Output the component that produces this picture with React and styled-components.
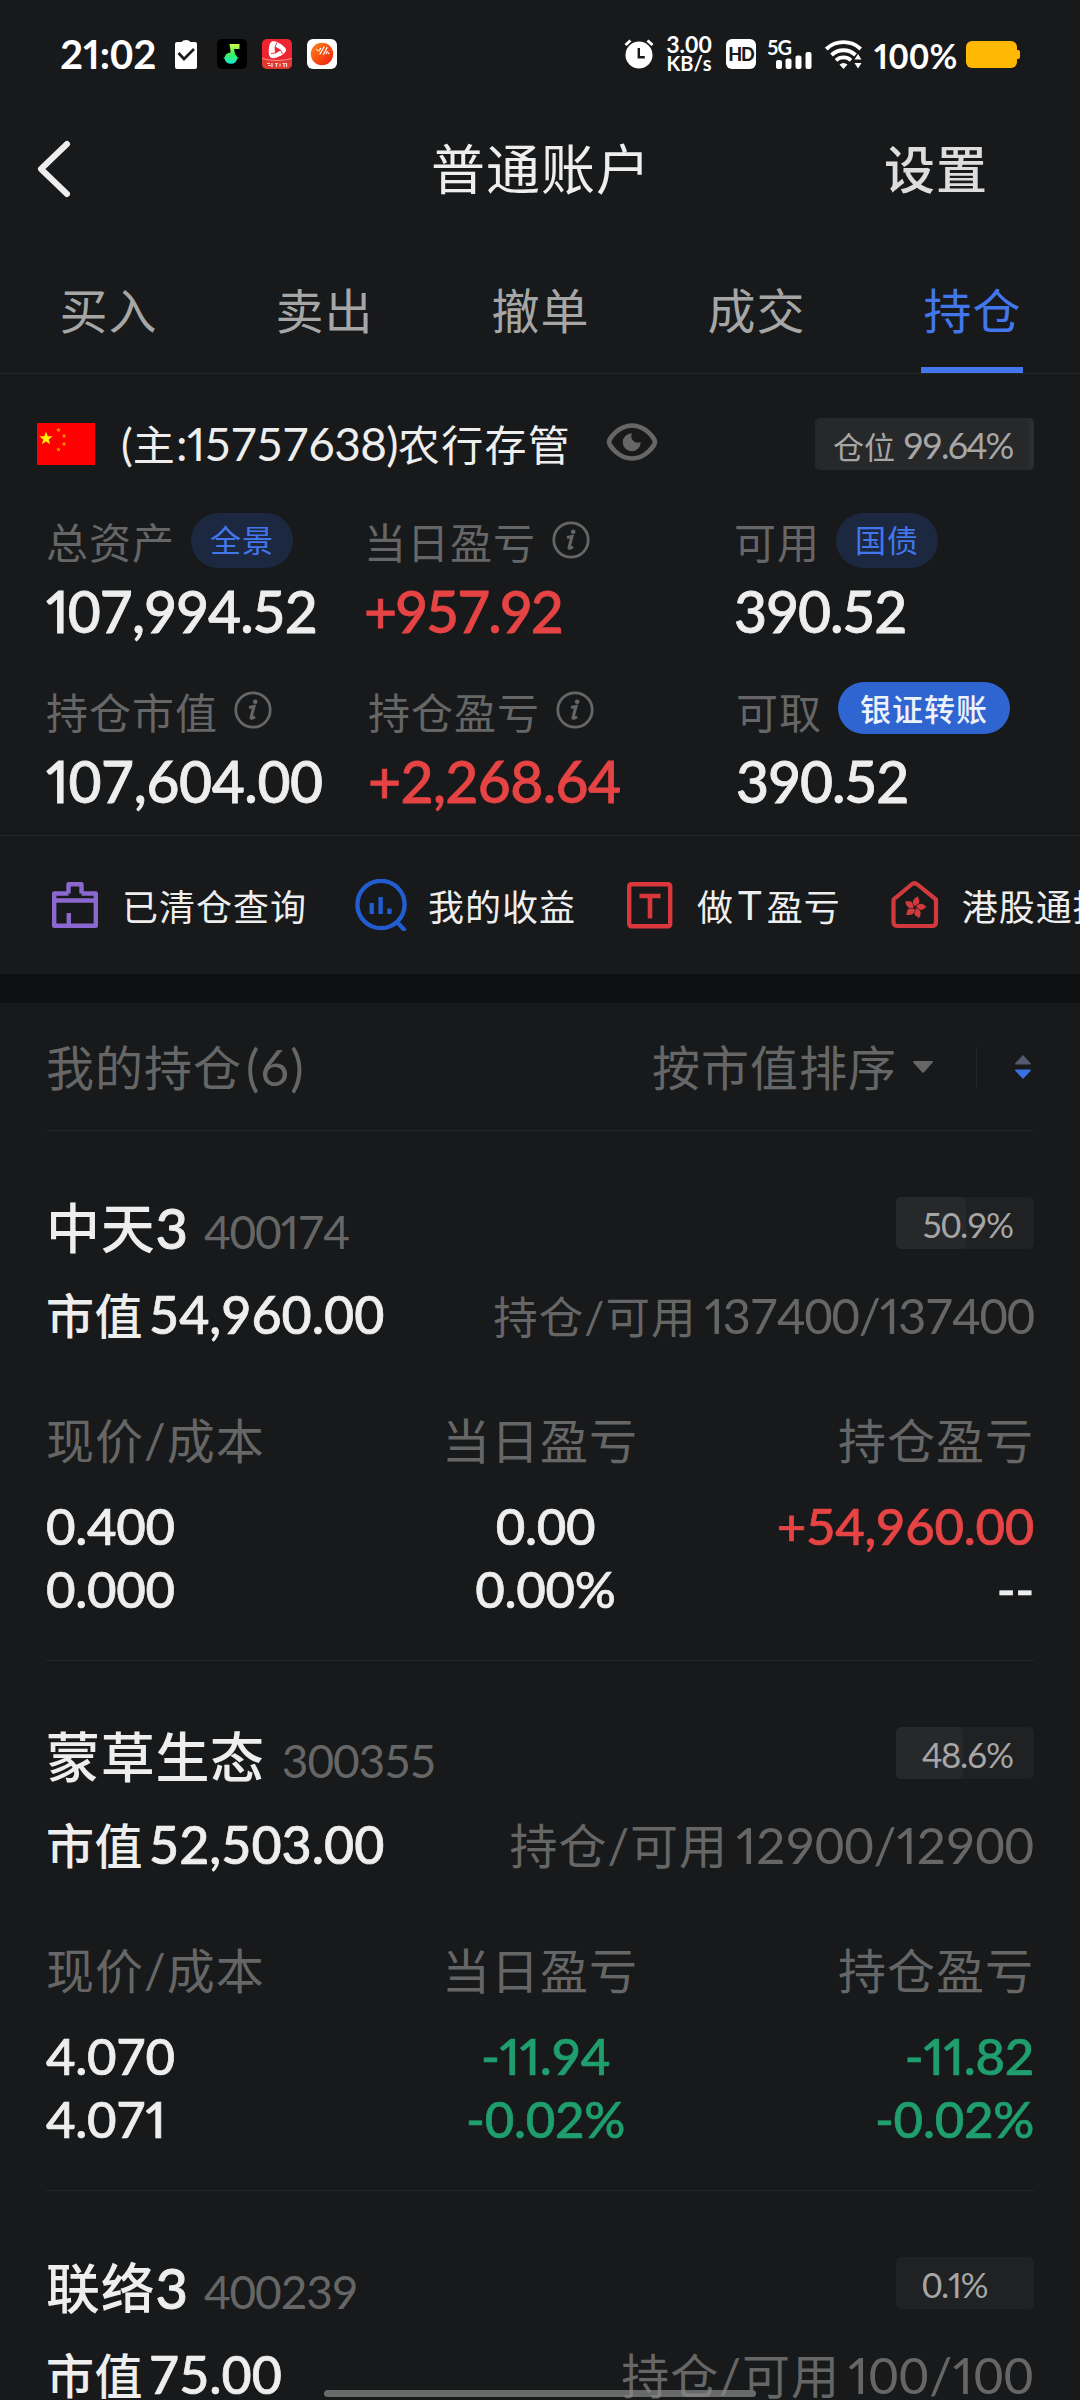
import styled, { createGlobalStyle, css } from 'styled-components';

const colors = {
  bg: '#17191a',
  band: '#0f1012',
  line: '#242628',
  text: '#eeeeee',
  sub: '#a6a6a6',
  muted: '#666666',
  blue: '#4277eb',
  red: '#e64344',
  green: '#1f9e6e',
};

const holdings = [
  {
    name: '中天',
    digit: '3',
    code: '400174',
    percent: '50.9%',
    fill: 50.9,
    value: '54,960.00',
    amount: '137400/137400',
    amountSpacing: -1.2,
    small: true,
    price: ['0.400', '0.000'],
    today: ['0.00', '0.00%'],
    total: ['+54,960.00', '--'],
    totalColors: [colors.red, colors.text],
  },
  {
    name: '蒙草生态',
    code: '300355',
    percent: '48.6%',
    fill: 48.6,
    value: '52,503.00',
    amount: '12900/12900',
    amountSpacing: -0.2,
    price: ['4.070', '4.071'],
    today: ['-11.94', '-0.02%'],
    total: ['-11.82', '-0.02%'],
    todayColor: colors.green,
    totalColors: [colors.green, colors.green],
  },
  {
    name: '联络',
    digit: '3',
    code: '400239',
    percent: '0.1%',
    fill: 0,
    value: '75.00',
    amount: '100/100',
    amountSpacing: 0.6,
  },
];

const App = () => {
  return (
    <>
      <GlobalStyle />
      <Screen>
        <StatusBar />
        <NavBar>
          <BackIcon />
          <Title>普通账户</Title>
          <Settings>设置</Settings>
        </NavBar>
        <Tabs>
          {['买入', '卖出', '撤单', '成交', '持仓'].map((tab) => (
            <Tab key={tab} $active={tab === '持仓'}>
              <span>{tab}</span>
            </Tab>
          ))}
        </Tabs>
        <Account />
        <Summary />
        <Shortcuts />
        <ListHeader>
          <ListTitle>
            我的持仓<Num $size={50} $spacing={0.9}>(6)</Num>
          </ListTitle>
          <Sort>
            <SortText>按市值排序</SortText>
            <CaretIcon />
            <Separator />
            <SortIcon />
          </Sort>
        </ListHeader>
        {holdings.map((item) => (
          <Holding key={item.code} {...item} />
        ))}
        <HomeBar />
      </Screen>
    </>
  );
};

// digits are tabular except for the 1, which keeps its own narrow width
const Digits = ({ children }) =>
  children
    .split(/(1)/)
    .map((part, i) => (part === '1' ? <One key={i}>1</One> : part));

const StatusBar = () => (
  <Status>
    <Clock>
      <Digits>21:02</Digits>
    </Clock>
    <AppIcons>
      <ClipboardIcon />
      <MusicIcon />
      <VideoIcon />
      <StockIcon />
    </AppIcons>
    <StatusRight>
      <AlarmIcon />
      <Speed>
        <span>3.00</span>
        <SpeedUnit>KB/s</SpeedUnit>
      </Speed>
      <HdBadge>HD</HdBadge>
      <Signal>
        <span>5G</span>
        <SignalBars />
      </Signal>
      <WifiIcon />
      <Battery>
        <Digits>100%</Digits>
      </Battery>
      <BatteryIcon />
    </StatusRight>
  </Status>
);

const Account = () => (
  <AccountRow>
    <FlagIcon />
    <AccountName>
      <Num $size={44} $spacing={0}>(</Num>主
      <Num $size={46} $spacing={-0.7}>
        <Digits>:15757638)</Digits>
      </Num>
      农行存管
    </AccountName>
    <EyeIcon />
    <Position>
      仓位 <Num $size={36} $spacing={-1.9}>99.64%</Num>
    </Position>
  </AccountRow>
);

const Summary = () => (
  <Stats>
    <StatRow $cols="318px 370px 1fr">
      <Stat label="总资产" value="107,994.52" spacing={-1} pill="全景" />
      <Stat label="当日盈亏" value="+957.92" spacing={-2} info red />
      <Stat label="可用" value="390.52" pill="国债" />
    </StatRow>
    <StatRow $cols="322px 368px 1fr">
      <Stat label="持仓市值" value="107,604.00" spacing={-0.4} info />
      <Stat label="持仓盈亏" value="+2,268.64" spacing={-0.6} info red />
      <Stat label="可取" value="390.52" pill="银证转账" solid />
    </StatRow>
  </Stats>
);

const Stat = ({ label, value, spacing = -1.1, pill, solid, info, red }) => (
  <div>
    <StatLabel>
      <span>{label}</span>
      {pill && <Pill $solid={solid}>{pill}</Pill>}
      {info && <InfoIcon />}
    </StatLabel>
    <StatValue $red={red} $spacing={spacing}>
      <Digits>{value}</Digits>
    </StatValue>
  </div>
);

const Shortcuts = () => (
  <ShortcutBar>
    <Shortcut>
      <BagIcon />
      已清仓查询
    </Shortcut>
    <Shortcut>
      <ProfitIcon />
      我的收益
    </Shortcut>
    <Shortcut>
      <TradeIcon />做<Letter>T</Letter>盈亏
    </Shortcut>
    <Shortcut>
      <HongKongIcon />
      港股通持仓
    </Shortcut>
  </ShortcutBar>
);

const Holding = ({
  name,
  digit,
  code,
  percent,
  fill,
  value,
  amount,
  amountSpacing,
  small,
  price,
  today,
  total,
  todayColor,
  totalColors,
}) => (
  <HoldingCard>
    <HoldingHead>
      <Name>
        {name}
        {digit && <Num $size={56} $spacing={-1}>{digit}</Num>}
      </Name>
      <Code>
        <Digits>{code}</Digits>
      </Code>
      <Percent>
        <PercentFill style={{ width: `${fill}%` }} />
        <PercentText>
          <Digits>{percent}</Digits>
        </PercentText>
      </Percent>
    </HoldingHead>
    <ValueRow>
      <MarketValue>
        市值<Num $size={52} $spacing={0}>{value}</Num>
      </MarketValue>
      <Amount $small={small}>
        持仓/可用
        <Num $size={small ? 49 : 51} $spacing={amountSpacing}>
          <Digits>{amount}</Digits>
        </Num>
      </Amount>
    </ValueRow>
    {price && (
      <>
        <Columns>
          <Label>现价/成本</Label>
          <Label>当日盈亏</Label>
          <Label>持仓盈亏</Label>
        </Columns>
        {[0, 1].map((i) => (
          <Figures key={i}>
            <Figure>
              <Digits>{price[i]}</Digits>
            </Figure>
            <Figure $color={todayColor}>
              <Digits>{today[i]}</Digits>
            </Figure>
            <Figure $color={totalColors[i]}>
              <Digits>{total[i]}</Digits>
            </Figure>
          </Figures>
        ))}
      </>
    )}
  </HoldingCard>
);

/* icons */

const BackIcon = () => (
  <svg width="36" height="62" viewBox="0 0 36 62" fill="none">
    <path
      d="M31 5 L5 30 L31 55"
      stroke={colors.text}
      strokeWidth="6"
      strokeLinecap="round"
      strokeLinejoin="round"
    />
  </svg>
);

const ClipboardIcon = () => (
  <svg width="22" height="30" viewBox="0 0 22 30">
    <path
      d="M2 3h4.500a5 3.500 0 0 1 9 0H20a2 2 0 0 1 2 2v23a2 2 0 0 1-2 2H2a2 2 0 0 1-2-2V5a2 2 0 0 1 2-2z"
      fill="#fff"
    />
    <path d="M3.500 14l5.500 6 10-10" fill="none" stroke="#17191a" strokeWidth="2.600" />
  </svg>
);

const MusicIcon = () => (
  <svg width="30" height="30" viewBox="0 0 30 30">
    <defs>
      <linearGradient id="music" x1="0" y1="0" x2="0" y2="1">
        <stop offset="0" stopColor="#d2fa4b" />
        <stop offset="0.5" stopColor="#3df05a" />
        <stop offset="1" stopColor="#1de9d6" />
      </linearGradient>
    </defs>
    <rect width="30" height="30" rx="5" fill="#000" />
    <path
      d="M12.500 5H22.500v5H17l1.200 5.500c1.300 1 2 2 2.200 3h2l-2.200 1.300A6.500 6.500 0 0 1 7.600 20L6.200 18.500h1.500c.2-2.600 2.600-4.800 6-5z"
      fill="url(#music)"
    />
  </svg>
);

const VideoIcon = () => (
  <svg width="30" height="30" viewBox="0 0 30 30">
    <rect width="30" height="30" rx="5" fill="#ee2430" />
    <path d="M0 20q15 4 30 0v5a5 5 0 0 1-5 5H5a5 5 0 0 1-5-5z" fill="#e0392f" />
    <path d="M0 19.500q15 4 30 0" fill="none" stroke="#f9b3a8" strokeWidth="0.800" />
    <path
      d="M8 4.500c1.500-3 5-2.500 8-1 3.500 1.800 8 5 8 7.500s-4 5.500-8 7c-3 1.200-7 2-8.300-.5-1.500-3-1-10 .3-13z"
      fill="#fff"
    />
    <path
      d="M13 8l5.500 3-5 3z M9 14.500l4.500-.5M18.500 11l2 4M13 8l2-4.500"
      fill="#ee2430"
      stroke="#ee2430"
      strokeWidth="0.900"
    />
    <path
      d="M5 24.500h3M6 26.500h3M10 24v4M13 24.500h3M14.500 24v4M18 24.500v3M20.500 24.500h3M22 24v4M24.500 24v4"
      stroke="#f8d5cc"
      strokeWidth="1.200"
    />
  </svg>
);

const StockIcon = () => (
  <svg width="30" height="30" viewBox="0 0 30 30">
    <defs>
      <linearGradient id="stock" x1="0" y1="0" x2="1" y2="1">
        <stop offset="0" stopColor="#f98a1c" />
        <stop offset="0.55" stopColor="#f84a10" />
        <stop offset="1" stopColor="#ee1c10" />
      </linearGradient>
    </defs>
    <rect width="30" height="30" rx="6" fill="#fff" />
    <circle cx="15" cy="15" r="11.200" fill="url(#stock)" />
    <path
      d="M9.800 10.500l.8 1M12 12l1.500-2.500M13 15l4-7M16.500 15.500l3.500-7M19.300 14.500l1-2M21.500 14l.4.600"
      stroke="#fff"
      strokeWidth="1.200"
      strokeLinecap="round"
    />
  </svg>
);

const AlarmIcon = () => (
  <svg width="30" height="30" viewBox="0 0 30 30" fill="none">
    <circle cx="15" cy="16" r="13.500" fill="#fff" />
    <path d="M1.500 6l5-4.500M28.500 6l-5-4.500" stroke="#fff" strokeWidth="3" />
    <path d="M14.800 9v9.300h6" stroke="#17191a" strokeWidth="2.400" />
  </svg>
);

const SignalBars = () => (
  <svg width="36" height="17" viewBox="0 0 36 17" fill="#fff">
    <rect x="0" y="8" width="6" height="9" rx="2" />
    <rect x="9.500" y="6.500" width="6" height="10.500" rx="2" />
    <rect x="19.500" y="3.500" width="6" height="13.500" rx="2" />
    <rect x="29.500" y="0" width="6" height="17" rx="2" />
  </svg>
);

const WifiIcon = () => (
  <svg width="38" height="30" viewBox="0 0 38 30">
    <g fill="none" stroke="#fff" strokeWidth="3.800">
      <path d="M1.300 10a25 25 0 0 1 34.400 0" />
      <path d="M6.500 16a17.500 17.500 0 0 1 24 0" />
      <path d="M11 21.300a11 11 0 0 1 15 0" />
    </g>
    <path d="M14.500 25.500q4-3 8 0L18.500 30z" fill="#fff" />
    <path d="M33 13.500l-5 7v9.500h9V20z" fill={colors.bg} />
    <path d="M33 15l3.500 5.500h-7zM33 29.500l3.500-5.500h-7z" fill="#fff" />
  </svg>
);

const BatteryIcon = () => (
  <svg width="54" height="27" viewBox="0 0 54 27" fill="#ffb902">
    <rect width="51" height="27" rx="6" />
    <rect x="48" y="9" width="6" height="9" rx="2" />
  </svg>
);

const star = 'M0-7 L1.700-2.300 L6.700-2.200 L2.700.9 L4.100 5.700 L0 2.900 L-4.100 5.700 L-2.700.9 L-6.700-2.200 L-1.700-2.300z';

const FlagIcon = () => (
  <svg width="58" height="42" viewBox="0 0 58 42">
    <rect width="58" height="42" fill="#fe0000" />
    <path d={star} transform="translate(9 15.500)" fill="#fff200" />
    <g fill="#ff9a00">
      <path d={star} transform="translate(21.500 7) scale(.36)" />
      <path d={star} transform="translate(27 13) scale(.36)" />
      <path d={star} transform="translate(27 21) scale(.36)" />
      <path d={star} transform="translate(21.500 26.500) scale(.36)" />
    </g>
  </svg>
);

const EyeIcon = () => (
  <svg width="52" height="42" viewBox="0 0 52 42">
    <path
      d="M3 19C3 16 12 2.500 26 2.500S49 16 49 19 40 35.500 26 35.500 3 22 3 19z"
      fill="none"
      stroke={colors.muted}
      strokeWidth="4.600"
    />
    <path d="M26 10.200a9 9 0 1 0 8.700 8.700 6.500 6.500 0 0 1-8.700-8.700z" fill={colors.muted} />
  </svg>
);

const InfoIcon = () => (
  <svg width="38" height="38" viewBox="0 0 38 38" fill="none" stroke={colors.muted}>
    <circle cx="19" cy="19" r="17.200" strokeWidth="2.800" />
    <circle cx="21.200" cy="10.800" r="2.300" fill={colors.muted} stroke="none" />
    <path d="M15 16.500l5-1-3 11q-.4 2 4-.8" strokeWidth="3" />
  </svg>
);

const BagIcon = () => (
  <svg width="52" height="52" viewBox="0 0 52 52" fill="none" stroke="#8a68cf" strokeWidth="4.400">
    <path d="M19.500 14.500V5.200h13v9.300M5.200 22V14.500h14.300M32.500 14.500h14.300V22" strokeLinejoin="round" />
    <path d="M5.200 21.500h41.600v25.300H5.200zM19.800 46.500V34" strokeLinejoin="round" />
  </svg>
);

const ProfitIcon = () => (
  <svg width="52" height="52" viewBox="0 0 52 52" fill="none" stroke="#215dd0" strokeWidth="4.400">
    <circle cx="26" cy="25.500" r="23.600" />
    <path d="M42.500 43.500l6.500 7" strokeLinecap="round" />
    <path d="M16.700 24v11M25.600 18v17M34.400 29.500V35" />
  </svg>
);

const TradeIcon = () => (
  <svg width="52" height="52" viewBox="0 0 52 52" fill="none" stroke="#d9373b">
    <rect x="5.200" y="5.200" width="41" height="42" rx="2" strokeWidth="4.400" />
    <path d="M15.500 17h21M26 17v22.500" strokeWidth="4.600" />
  </svg>
);

const HongKongIcon = () => (
  <svg width="52" height="52" viewBox="0 0 52 52">
    <path
      d="M4.500 20.500L22.500 5.500q3-2.500 6 0L47 20.500V43q0 4-4 4H8.500q-4 0-4-4z"
      fill="none"
      stroke="#d13a3d"
      strokeWidth="4.200"
      strokeLinejoin="round"
    />
    {[8, 80, 152, 224, 296].map((angle) => (
      <path
        key={angle}
        d="M-.3-1C-4-3.500-4-8.500 1.800-11.500 1.300-9.500 4.500-7.800 3.400-5 2.600-3.200 .4-3-.3-1z"
        transform={`translate(26 28.500) rotate(${angle})`}
        fill="#d13a3d"
      />
    ))}
  </svg>
);

const CaretIcon = () => (
  <svg width="20" height="12" viewBox="0 0 20 12">
    <path d="M1 0h18a1 1 0 0 1 .7 1.500L11 11.300q-1 1-2 0L.3 1.500A1 1 0 0 1 1 0z" fill={colors.muted} />
  </svg>
);

const SortIcon = () => (
  <svg width="16" height="24" viewBox="0 0 16 24">
    <path d="M8 0l8 8.500q0 .9-1 .9H1q-1 0-1-.9z" fill="#555b6e" />
    <path d="M8 24l8-8.500q0-.9-1-.9H1q-1 0-1 .9z" fill="#3a70e2" />
  </svg>
);

/* styles */

const GlobalStyle = createGlobalStyle`
  * {
    box-sizing: border-box;
  }

  body {
    margin: 0;
    background: ${colors.bg};
    color: ${colors.text};
    font-family: Lato, 'Noto Sans CJK SC', sans-serif;
    font-kerning: none;
  }

  svg {
    display: block;
    flex-shrink: 0;
  }
`;

const Screen = styled.main`
  position: relative;
  width: 1080px;
  height: 2400px;
  overflow: hidden;
`;

const Num = styled.span`
  font-size: ${({ $size }) => $size}px;
  letter-spacing: ${({ $spacing }) => $spacing}px;
`;

const One = styled.span`
  font-variant-numeric: proportional-nums;
`;

const Status = styled.div`
  height: 108px;
  padding: 0 60px;
  display: flex;
  align-items: center;
  color: #fff;
  font-weight: 700;
`;

const Clock = styled.div`
  width: 115px;
  font-size: 40px;
  letter-spacing: 0;
  line-height: 48px;
`;

const AppIcons = styled.div`
  display: flex;
  gap: 15px;

  svg:first-child {
    margin-right: 5px;
  }
`;

const StatusRight = styled.div`
  margin-left: auto;
  display: flex;
  align-items: center;
`;

const Speed = styled.div`
  width: 48px;
  margin-left: 11px;
  display: flex;
  flex-direction: column;
  align-items: center;
  font-size: 23px;
  line-height: 19px;
`;

const SpeedUnit = styled.span`
  font-size: 20px;
`;

const HdBadge = styled.div`
  width: 30px;
  height: 30px;
  margin-left: 13px;
  border-radius: 6px;
  background: #fff;
  color: ${colors.bg};
  font-size: 18px;
  font-weight: 900;
  letter-spacing: -1px;
  line-height: 31px;
  text-align: center;
`;

const Signal = styled.div`
  position: relative;
  width: 45px;
  height: 30px;
  margin-left: 11px;
  margin-right: 13px;
  font-size: 20px;
  line-height: 16px;
  letter-spacing: -1px;

  svg {
    position: absolute;
    right: 0;
    bottom: 0;
  }
`;

const Battery = styled.div`
  margin: 4px 10px 0 11px;
  width: 82px;
  font-size: 34px;
  letter-spacing: 0.7px;
  line-height: 40px;
`;

const NavBar = styled.div`
  height: 124px;
  padding: 0 92px 0 36px;
  display: grid;
  grid-template-columns: 1fr auto 1fr;
  align-items: center;
  line-height: 60px;
`;

const Title = styled.h1`
  margin: 0 -29px 0 29px;
  font-size: 54px;
  font-weight: 400;
  letter-spacing: 1px;
`;

const Settings = styled.div`
  justify-self: end;
  font-size: 51px;
  font-weight: 500;
  letter-spacing: 1px;
  color: #dddddd;
`;

const Tabs = styled.div`
  height: 142px;
  display: flex;
  border-bottom: 1px solid ${colors.line};
`;

const Tab = styled.div`
  flex: 1;
  display: flex;
  justify-content: center;
  padding-top: 43px;
  color: ${({ $active }) => ($active ? colors.blue : colors.sub)};
  font-size: 48px;
  letter-spacing: 1px;
  line-height: 71px;

  span {
    width: 102px;
    padding: 0 0 1px 1px;
    text-align: center;
    ${({ $active }) =>
      $active &&
      css`
        border-bottom: 6px solid ${colors.blue};
      `}
  }
`;

const AccountRow = styled.div`
  height: 139px;
  padding: 0 46px 0 37px;
  display: flex;
  align-items: center;
`;

const AccountName = styled.div`
  width: 485px;
  margin: 2px 0 0 26px;
  font-size: 42px;
  letter-spacing: 1.3px;
  line-height: 60px;
  white-space: nowrap;
`;

const Position = styled.div`
  width: 219px;
  height: 52px;
  margin-left: auto;
  padding-left: 18px;
  border-radius: 5px;
  background: linear-gradient(90deg, #27282a 97.500%, #2c2d2e 97.500%);
  color: ${colors.sub};
  font-size: 31px;
  line-height: 54px;
`;

const Stats = styled.section`
  height: 323px;
  padding-left: 46px;
  border-bottom: 1px solid ${colors.line};
`;

const StatRow = styled.div`
  height: 170px;
  display: grid;
  grid-template-columns: ${({ $cols }) => $cols};
`;

const StatLabel = styled.div`
  height: 54px;
  display: flex;
  align-items: center;
  gap: 16px;
  color: ${colors.muted};
  font-size: 42px;
  letter-spacing: 1px;

  > span:first-child {
    padding-top: 5px;
    line-height: 50px;
  }
`;

const Pill = styled.span`
  height: ${({ $solid }) => ($solid ? 52 : 55)}px;
  margin-top: ${({ $solid }) => ($solid ? -4 : 0)}px;
  padding: 0 ${({ $solid }) => ($solid ? 22 : 19)}px;
  border-radius: 28px;
  background: ${({ $solid }) => ($solid ? '#2e65d0' : '#1c2740')};
  color: ${({ $solid }) => ($solid ? '#edf2fd' : colors.blue)};
  font-size: 31px;
  font-weight: ${({ $solid }) => ($solid ? 500 : 400)};
  line-height: ${({ $solid }) => ($solid ? 54 : 55)}px;
`;

const StatValue = styled.div`
  padding-top: 1px;
  color: ${({ $red }) => ($red ? colors.red : colors.text)};
  font-size: 57px;
  font-weight: 500;
  letter-spacing: ${({ $spacing }) => $spacing}px;
  line-height: 86px;
  -webkit-text-stroke: 0.8px currentColor;
`;

const ShortcutBar = styled.div`
  height: 167px;
  padding-left: 49px;
  display: flex;
  gap: 48px;
  border-bottom: 29px solid ${colors.band};
  overflow: hidden;
`;

const Shortcut = styled.div`
  display: flex;
  align-items: center;
  flex-shrink: 0;
  font-size: 36px;
  letter-spacing: 1px;

  svg {
    margin-right: 21px;
  }
`;

const Letter = styled.span`
  margin: 0 4px;
  font-size: 40px;
`;

const ListHeader = styled.div`
  height: 128px;
  margin: 0 46px;
  display: flex;
  justify-content: space-between;
  align-items: center;
  border-bottom: 1px solid ${colors.line};
  color: ${colors.muted};
  font-size: 48px;
  letter-spacing: 1px;
`;

const ListTitle = styled.div`
  padding-top: 2px;
  line-height: 60px;

  ${Num} {
    margin-left: 4px;
  }
`;

const Sort = styled.div`
  display: flex;
  align-items: center;
  padding-right: 3px;
`;

const SortText = styled.span`
  margin-right: 16px;
  padding-top: 3px;
  line-height: 60px;
`;

const Separator = styled.div`
  width: 1px;
  height: 40px;
  margin: 0 38px 0 43px;
  background: ${colors.line};
`;

const HoldingCard = styled.article`
  height: 530px;
  margin: 0 46px;
  padding-top: 65px;
  border-bottom: 1px solid ${colors.line};
`;

const HoldingHead = styled.div`
  height: 64px;
  display: flex;
  align-items: baseline;
  line-height: 63px;
`;

const Name = styled.div`
  font-size: 54px;
  font-weight: 500;
  letter-spacing: 0.7px;

  ${Num} {
    -webkit-text-stroke: 0.9px currentColor;
  }
`;

const Code = styled.div`
  margin-left: 17px;
  color: ${colors.muted};
  font-size: 46px;
  letter-spacing: -1.1px;
`;

const Percent = styled.div`
  position: relative;
  align-self: flex-start;
  width: 138px;
  height: 52px;
  margin: 1px 0 0 auto;
  padding-left: 26px;
  border-radius: 5px;
  background: #202123;
  color: ${colors.sub};
  font-size: 35px;
  letter-spacing: -1.3px;
  line-height: 55px;
`;

const PercentText = styled.span`
  position: relative;
`;

const PercentFill = styled.div`
  position: absolute;
  inset: 0 auto 0 0;
  border-radius: 5px;
  background: #27282a;
`;

const ValueRow = styled.div`
  height: 60px;
  margin-top: 24px;
  display: flex;
  justify-content: space-between;
  align-items: baseline;
  line-height: 60px;
`;

const MarketValue = styled.div`
  font-size: 48px;
  font-weight: 500;
  letter-spacing: 0.5px;

  ${Num} {
    margin-left: 6px;
    -webkit-text-stroke: 0.7px currentColor;
  }
`;

const Amount = styled.div`
  color: ${colors.muted};
  font-size: ${({ $small }) => ($small ? 44.5 : 48)}px;
  letter-spacing: 1px;

  ${Num} {
    margin-left: 8px;
  }
`;

const Columns = styled.div`
  margin: 67px 0 23px;
  display: grid;
  grid-template-columns: repeat(3, 1fr);
  line-height: 60px;
`;

const Label = styled.div`
  color: ${colors.muted};
  font-size: 48px;
  letter-spacing: 1px;

  &:nth-child(2) {
    text-align: center;
  }
  &:nth-child(3) {
    text-align: right;
  }
`;

const Figures = styled.div`
  display: grid;
  grid-template-columns: repeat(3, 1fr);
  line-height: 63px;
`;

const Figure = styled.div`
  color: ${({ $color }) => $color || colors.text};
  font-size: 51px;
  font-weight: 500;
  letter-spacing: -0.3px;
  -webkit-text-stroke: 0.7px currentColor;

  &:nth-child(2) {
    padding-left: 11px;
    text-align: center;
  }
  &:nth-child(3) {
    text-align: right;
  }
`;

const HomeBar = styled.div`
  position: absolute;
  left: 324px;
  bottom: 3px;
  width: 432px;
  height: 7px;
  border-radius: 4px;
  background: rgba(140, 140, 140, 0.7);
`;

export default App;
